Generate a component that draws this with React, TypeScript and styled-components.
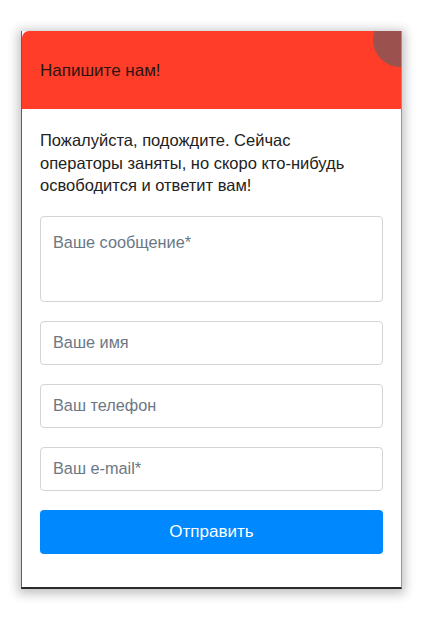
import React from "react";
import styled, { createGlobalStyle } from "styled-components";

const Global = createGlobalStyle`
  html, body { margin: 0; padding: 0; background: #ffffff; }
  body { font-family: "Liberation Sans", Arial, sans-serif; }
  * { box-sizing: border-box; }
`;

const Page = styled.div`
  width: 424px;
  height: 619px;
  padding: 31px 0 0 21px;
`;

const Frame = styled.div`
  position: relative;
  width: 381px;
  height: 558px;
  background: #ffffff;
  border-left: 1px solid #c0392b;
  border-right: 1px solid #8a96b0;
  border-bottom: 2px solid #2a2a2a;
  box-shadow: 0 2px 10px 3px rgba(0, 0, 0, 0.24);
  display: flex;
  flex-direction: column;
`;

const Header = styled.div`
  position: relative;
  height: 78px;
  background: #ff3d28;
  border-top-left-radius: 7px;
  display: flex;
  align-items: center;
  padding: 1px 0 0 18px;
  overflow: hidden;
`;

const CornerBg = styled.div`
  position: absolute;
  top: 0;
  right: 0;
  width: 24px;
  height: 20px;
  background: #ead9ea;
`;

const Avatar = styled.div`
  position: absolute;
  top: -18px;
  right: -26px;
  width: 54px;
  height: 54px;
  border-radius: 50%;
  background: #9b524f;
`;

const Title = styled.h1`
  margin: 0;
  font-size: 17px;
  font-weight: 400;
  color: #2b1513;
`;

const Body = styled.div`
  padding: 20px 18px 0 18px;
  display: flex;
  flex-direction: column;
`;

const Intro = styled.p`
  margin: 0 0 19px 0;
  max-width: 322px;
  font-size: 16.5px;
  line-height: 22.5px;
  color: #222222;
`;

const Form = styled.form`
  display: flex;
  flex-direction: column;
  gap: 19px;
`;

const fieldBase = `
  width: 100%;
  border: 1px solid #d4d4d4;
  border-radius: 4px;
  font-family: "Liberation Sans", Arial, sans-serif;
  font-size: 16.3px;
  color: #222;
  padding: 0 12px;
  background: #fff;
  outline: none;
  &::placeholder { color: #6b7785; opacity: 1; }
`;

const TextArea = styled.textarea`
  ${fieldBase}
  height: 86px;
  padding-top: 15px;
  resize: none;
  line-height: 20px;
`;

const Input = styled.input`
  ${fieldBase}
  height: 44px;
`;

const Submit = styled.button`
  height: 44px;
  border: none;
  border-radius: 4px;
  background: #0088ff;
  color: #ffffff;
  font-family: "Liberation Sans", Arial, sans-serif;
  font-size: 17px;
  cursor: pointer;
`;

export default function App() {
  return (
    <>
      <Global />
      <Page>
        <Frame>
          <Header>
            <CornerBg />
            <Avatar />
            <Title>Напишите нам!</Title>
          </Header>
          <Body>
            <Intro>
              Пожалуйста, подождите. Сейчас операторы заняты, но скоро кто-нибудь освободится и ответит вам!
            </Intro>
            <Form onSubmit={(e) => e.preventDefault()}>
              <TextArea placeholder="Ваше сообщение*" />
              <Input placeholder="Ваше имя" />
              <Input placeholder="Ваш телефон" />
              <Input placeholder="Ваш e-mail*" />
              <Submit type="submit">Отправить</Submit>
            </Form>
          </Body>
        </Frame>
      </Page>
    </>
  );
}
